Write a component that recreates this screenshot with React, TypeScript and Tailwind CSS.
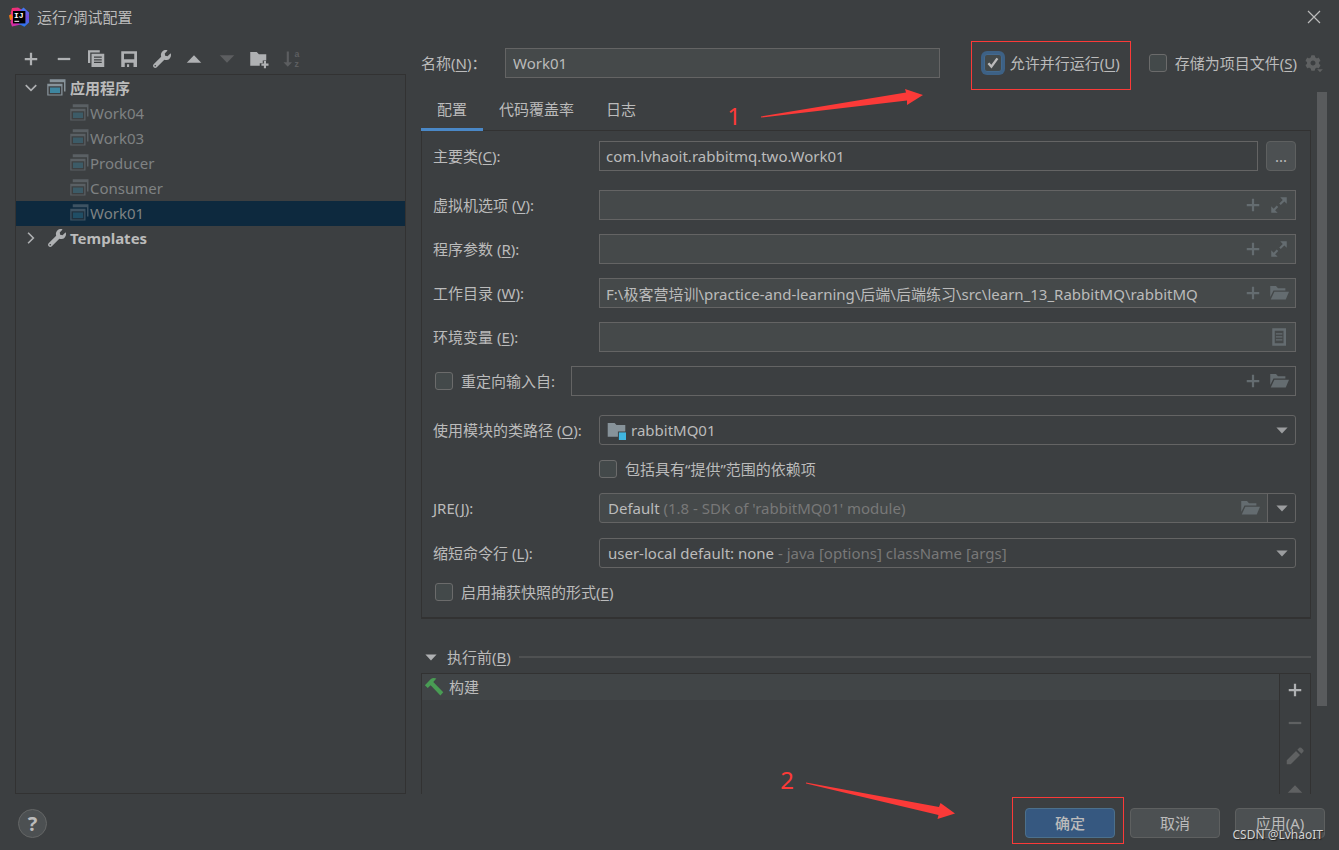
import React, { useState } from 'react';
import { FaCog, FaWrench } from 'react-icons/fa';

type IconProps = { className?: string };

const Svg = ({ className = 'size-5', children }: IconProps & { children: React.ReactNode }) => (
  <svg viewBox="0 0 16 16" className={className} fill="currentColor" aria-hidden="true">
    {children}
  </svg>
);

const PlusIcon = ({ className }: IconProps) => (
  <Svg className={className}>
    <path d="M7.1 3h1.8v4.1H13v1.8H8.9V13H7.1V8.9H3V7.1h4.1z" />
  </Svg>
);

const MinusIcon = ({ className }: IconProps) => (
  <Svg className={className}>
    <path d="M3 7.1h10v1.8H3z" />
  </Svg>
);

const CopyIcon = ({ className }: IconProps) => (
  <Svg className={className}>
    <path d="M1.6 1h9.4v1.8H3.4v8.4H1.6z" />
    <path fillRule="evenodd" d="M4.4 3.8h10.2v10.6H4.4zM6.4 6v1h6.2V6zm0 2.1v1h6.2v-1zm0 2.1v1h6.2v-1z" />
  </Svg>
);

const SaveIcon = ({ className }: IconProps) => (
  <Svg className={className}>
    <path fillRule="evenodd" d="M1.8 1.8h12.6v12.6H1.8zM4 3.8v4.4h8.2V3.8zM4.6 11v3.4h1.8v-2.2h1.7v2.2h3.5V11z" />
  </Svg>
);

const UpIcon = ({ className }: IconProps) => (
  <Svg className={className}>
    <path d="M2.2 11L8 5l5.8 6z" />
  </Svg>
);

const DownIcon = ({ className }: IconProps) => (
  <Svg className={className}>
    <path d="M2.2 5L8 11l5.8-6z" />
  </Svg>
);

const NewFolderIcon = ({ className }: IconProps) => (
  <Svg className={className}>
    <path d="M1 2.4h5.2l1.7 1.8h5.9v5H11v2.2H8.6v2H1z" />
    <path d="M11.9 9.6h1.7v2h2v1.7h-2v2h-1.7v-2h-2v-1.7h2z" />
  </Svg>
);

const SortIcon = ({ className }: IconProps) => (
  <Svg className={className}>
    <path d="M3.8 2h1.7v8.6H8l-3.4 3.6-3.4-3.6h2.6z" />
    <text x="10" y="6.6" fontSize="7" fontWeight="bold" fontFamily="Liberation Sans">a</text>
    <text x="10" y="14.6" fontSize="7" fontWeight="bold" fontFamily="Liberation Sans">z</text>
  </Svg>
);

const ExpandIcon = ({ className }: IconProps) => (
  <Svg className={className}>
    <path d="M9 1.8h5.2V7l-1.9-1.9-2.9 2.9-1.2-1.2 2.8-2.9zM1.8 9l1.9 1.9 2.5-2.5 1.2 1.2-2.5 2.5L6.900 14.200H1.800z" />
  </Svg>
);

const FolderIcon = ({ className }: IconProps) => (
  <Svg className={className}>
    <path d="M1 2.4h4.6l1.6 1.8h5.9v1.7H3.6L1 11.2z" />
    <path d="M4.3 6.9H16l-2.6 6.3H1.4z" />
  </Svg>
);

const DocumentIcon = ({ className }: IconProps) => (
  <Svg className={className}>
    <path fillRule="evenodd" d="M2.600 1h11v14h-11zm2 2v10h7V3z" />
    <path d="M5.500 5h5.200v1H5.500zM5.500 7.400h5.200v1H5.500zM5.500 9.800h5.200v1H5.500z" />
  </Svg>
);

const PencilIcon = ({ className }: IconProps) => (
  <Svg className={className}>
    <path d="M1.400 14.600v-3.200l7.400-7.400L12 7.200l-7.400 7.400zM9.900 2.900l1.500-1.500q.8-.6 1.600 0l1.600 1.600q.6.8 0 1.600l-1.500 1.500z" />
  </Svg>
);

const HammerIcon = ({ className }: IconProps) => (
  <Svg className={className}>
    <path d="M.7 6.600L5.500 1.600q1.800-1.300 4.400-.4L7.400 4l8 8.200-2.300 2.500-7.800-8.200L3 8.800z" />
  </Svg>
);

const ArrowDown = ({ className }: IconProps) => (
  <svg viewBox="0 0 12 7" className={className} fill="currentColor" aria-hidden="true">
    <path d="M.4.4h11.2L6 6.600z" />
  </svg>
);

const AppIcon = ({ className }: IconProps) => (
  <svg viewBox="0 0 16 16" className={className} aria-hidden="true">
    <path fill="currentColor" d="M3 1h12.600v9.800h-1.200V3.300H3zM1 4.500h12.200V14H1z" />
    <path fill="#3c3f41" d="M2 6.600h10.200v6.600H2z" />
    <path fill="#3e86a0" d="M3.200 7.600h8V12h-8z" />
  </svg>
);

const ModuleIcon = ({ className }: IconProps) => (
  <svg viewBox="0 0 16 16" className={className} aria-hidden="true">
    <path fill="#87939a" d="M.6 1.600h5.800L8 3.400h7.400v5.400H9.200v4.400H.6z" />
    <path fill="#40b6e0" d="M10 9.600h6V16h-6z" />
  </svg>
);

const Logo = () => (
  <svg viewBox="0 0 20 20" className="size-5" aria-hidden="true">
    <defs>
      <linearGradient id="logo-blue" x1="0" y1="0" x2="0" y2="1">
        <stop offset="0" stopColor="#3b7cf5" />
        <stop offset=".5" stopColor="#7a4bd8" />
        <stop offset="1" stopColor="#1e7df2" />
      </linearGradient>
      <linearGradient id="logo-pink" x1="0" y1="0" x2="1" y2="1">
        <stop offset="0" stopColor="#fe315d" />
        <stop offset="1" stopColor="#b22bd8" />
      </linearGradient>
    </defs>
    <path fill="#f97a12" d="M0 8.600l4-3V14l-3-1.200z" />
    <path fill="url(#logo-pink)" d="M3 1l6-.6 5 3V17L3 19.400 1.400 15 4 10 1.600 6z" />
    <path fill="url(#logo-blue)" d="M11 3.400L14.600.4 20 5.600v10l-4.600 4.200L10 17z" />
    <path fill="#000" d="M4 4h12.400v12.400H4z" />
    <path fill="#fff" d="M5.400 13.800h4.800v1H5.400z" />
    <text x="5" y="11" fill="#fff" fontSize="8" fontWeight="bold" fontFamily="Liberation Mono">IJ</text>
  </svg>
);

const toolbar = [
  { label: '添加', icon: PlusIcon, disabled: false },
  { label: '移除', icon: MinusIcon, disabled: false },
  { label: '复制', icon: CopyIcon, disabled: false },
  { label: '保存', icon: SaveIcon, disabled: false },
  { label: '编辑模板', icon: FaWrench, disabled: false },
  { label: '上移', icon: UpIcon, disabled: false },
  { label: '下移', icon: DownIcon, disabled: true },
  { label: '新建文件夹', icon: NewFolderIcon, disabled: false },
  { label: '排序', icon: SortIcon, disabled: true },
];

const configurations = ['Work04', 'Work03', 'Producer', 'Consumer', 'Work01'];

const tabs = ['配置', '代码覆盖率', '日志'];

const Mnemonic = ({ text, letter, tail = '' }: { text: string; letter: string; tail?: string }) => (
  <>
    {text}(<span className="underline underline-offset-2">{letter}</span>){tail}
  </>
);

type CheckProps = { id: string; children: React.ReactNode; defaultChecked?: boolean; focused?: boolean };

const Check = ({ id, children, defaultChecked, focused }: CheckProps) => (
  <div className="flex h-[18px] items-center gap-2 whitespace-nowrap">
    <span className="grid size-[18px] shrink-0">
      <input
        id={id}
        type="checkbox"
        defaultChecked={defaultChecked}
        className={`peer col-start-1 row-start-1 size-[18px] appearance-none rounded-[3px] border bg-[#43494a] ${
          focused ? 'border-[#43698e] ring-3 ring-[#3d6185]' : 'border-[#6b6b6b]'
        }`}
      />
      <svg
        viewBox="0 0 18 18"
        className="pointer-events-none invisible col-start-1 row-start-1 size-[18px] peer-checked:visible"
        fill="none"
        stroke="#bbbbbb"
        strokeWidth="2.4"
        aria-hidden="true"
      >
        <path d="M4.400 9.200l3 3.400 6-8.200" />
      </svg>
    </span>
    <label htmlFor={id}>{children}</label>
  </div>
);

type FieldProps = {
  id: string;
  value?: string;
  label?: string;
  flat?: boolean;
  actions?: { label: string; icon: React.ComponentType<IconProps> }[];
};

const Field = ({ id, value = '', label, flat, actions = [] }: FieldProps) => (
  <div
    className={`flex h-[30px] min-w-0 flex-1 items-center border border-[#646464] ${flat ? 'bg-[#3c3f41]' : 'bg-[#45494a]'}`}
  >
    <input id={id} aria-label={label} defaultValue={value} className="h-full min-w-0 flex-1 bg-transparent px-1.5 outline-none" />
    {actions.length > 0 && (
      <div className="flex items-center gap-1.5 pr-1.5 text-[#646c70]">
        {actions.map(({ label: name, icon: Icon }) => (
          <button key={name} type="button" aria-label={name}>
            <Icon className="size-5" />
          </button>
        ))}
      </div>
    )}
  </div>
);

const Row = ({ id, label, children }: { id: string; label: React.ReactNode; children: React.ReactNode }) => (
  <div className="flex items-center">
    <label htmlFor={id} className="w-[166px] shrink-0 whitespace-nowrap">
      {label}
    </label>
    {children}
  </div>
);

const macro = { label: '插入宏', icon: PlusIcon };
const expand = { label: '展开', icon: ExpandIcon };
const browse = { label: '浏览', icon: FolderIcon };

const Sidebar = () => {
  const [selected, setSelected] = useState('Work01');

  return (
    <aside className="flex w-[391px] shrink-0 flex-col">
      <div className="flex h-10 w-[287px] items-center justify-between pt-2.5 pl-1.5">
        {toolbar.map(({ label, icon: Icon, disabled }) => (
          <button
            key={label}
            type="button"
            aria-label={label}
            disabled={disabled}
            className="grid size-5 place-items-center text-[#afb1b3] disabled:text-[#5c5e60]"
          >
            <Icon className={Icon === FaWrench ? 'size-[18px]' : 'size-5'} />
          </button>
        ))}
      </div>
      <div className="flex-1 border border-[#323232] pt-px">
        <div className="flex h-[25px] items-center pb-px font-bold">
          <svg viewBox="0 0 12 12" className="mr-2 ml-2 size-3.5" fill="none" stroke="#afb1b3" strokeWidth="1.4" aria-hidden="true">
            <path d="M1.500 3.500L6 8l4.500-4.500" />
          </svg>
          <AppIcon className="mr-1 size-5 text-[#87939a]" />
          应用程序
        </div>
        <ul>
          {configurations.map((name) => (
            <li key={name}>
              <button
                type="button"
                onClick={() => setSelected(name)}
                className={`flex h-[25px] w-full items-center pb-px pl-[53px] text-[#7f8283] ${name === selected ? 'bg-[#0d293e]' : ''}`}
              >
                <AppIcon className="mr-px size-5 text-[#87939a] opacity-40" />
                {name}
              </button>
            </li>
          ))}
        </ul>
        <div className="flex h-[25px] items-center pb-px font-bold">
          <svg viewBox="0 0 12 12" className="mr-2 ml-2 size-3.5" fill="none" stroke="#afb1b3" strokeWidth="1.4" aria-hidden="true">
            <path d="M3.500 1.500L8 6l-4.500 4.500" />
          </svg>
          <FaWrench className="mr-1 ml-0.5 size-[18px] text-[#afb1b3]" />
          Templates
        </div>
      </div>
    </aside>
  );
};

const Header = () => (
  <div className="flex h-14 items-end pr-1.5">
    <div className="flex h-[49px] flex-1 items-center">
      <label htmlFor="name" className="w-21 shrink-0 pb-1.5">
        <Mnemonic text="名称" letter="N" tail="：" />
      </label>
      <input id="name" defaultValue="Work01" className="mb-1.5 h-[30px] min-w-0 flex-1 border border-[#646464] bg-[#45494a] px-[7px] outline-none" />
      <div className="ml-[31px] flex h-[49px] items-center border border-[#fb3a38] pr-2.5 pb-1.5 pl-3">
        <Check id="parallel" defaultChecked focused>
          <Mnemonic text="允许并行运行" letter="U" />
        </Check>
      </div>
      <div className="ml-[18px] flex items-center gap-2 pb-1.5">
        <Check id="store">
          <Mnemonic text="存储为项目文件" letter="S" />
        </Check>
        <button type="button" aria-label="存储选项" className="relative text-[#5f6162]">
          <FaCog className="size-4" />
          <ArrowDown className="absolute -right-0.5 -bottom-0.5 w-1.5" />
        </button>
      </div>
    </div>
  </div>
);

const Tabs = () => {
  const [active, setActive] = useState(0);

  return (
    <div className="relative flex h-10" role="tablist">
      {tabs.map((tab, index) => (
        <button
          key={tab}
          type="button"
          role="tab"
          aria-selected={index === active}
          onClick={() => setActive(index)}
          className={`h-[41px] border-b-3 px-4 ${index === active ? 'border-[#4a88c7]' : 'border-transparent'}`}
        >
          {tab}
        </button>
      ))}
      <div className="pointer-events-none absolute -top-2 right-[388px] flex items-start gap-5 text-[#fb3a38]">
        <span className="pt-[22px] text-2xl leading-6">1</span>
        <svg viewBox="0 0 162 34" className="mt-1.5 h-[34px] w-[162px]" fill="currentColor" aria-hidden="true">
          <path d="M0 28.500L145 4.500 144 1 162 7 146 17 146 12.500 0 29.500z" />
        </svg>
      </div>
    </div>
  );
};

const ConfigPanel = () => (
  <section className="flex flex-col border border-b-2 border-[#323232] pt-2.5 pr-3.5 pb-4 pl-[11px]">
    <Row id="main-class" label={<Mnemonic text="主要类" letter="C" tail=":" />}>
      <Field id="main-class" value="com.lvhaoit.rabbitmq.two.Work01" flat />
      <button type="button" aria-label="选择主要类" className="ml-2 h-[30px] w-[30px] rounded-[4px] border border-[#5e6060] bg-[#4c5052]">
        ...
      </button>
    </Row>
    <div className="mt-[19px] flex flex-col gap-3.5">
      <Row id="vm" label={<Mnemonic text="虚拟机选项 " letter="V" tail=":" />}>
        <Field id="vm" actions={[macro, expand]} />
      </Row>
      <Row id="args" label={<Mnemonic text="程序参数 " letter="R" tail=":" />}>
        <Field id="args" actions={[macro, expand]} />
      </Row>
      <Row id="cwd" label={<Mnemonic text="工作目录 " letter="W" tail=":" />}>
        <Field
          id="cwd"
          value="F:\极客营培训\practice-and-learning\后端\后端练习\src\learn_13_RabbitMQ\rabbitMQ"
          actions={[macro, browse]}
        />
      </Row>
      <Row id="env" label={<Mnemonic text="环境变量 " letter="E" tail=":" />}>
        <Field id="env" actions={[{ label: '编辑环境变量', icon: DocumentIcon }]} />
      </Row>
      <div className="flex items-center pl-0.5">
        <div className="w-[136px]">
          <Check id="redirect">重定向输入自:</Check>
        </div>
        <Field id="redirect-file" label="输入文件" flat actions={[macro, browse]} />
      </div>
    </div>
    <div className="mt-[19px] flex flex-col gap-[15px]">
      <Row id="module" label={<Mnemonic text="使用模块的类路径 " letter="O" tail=":" />}>
        <div className="relative h-[30px] flex-1">
          <select id="module" className="h-full w-full appearance-none rounded-[3px] border border-[#646464] pl-[31px] outline-none">
            <option>rabbitMQ01</option>
          </select>
          <ModuleIcon className="pointer-events-none absolute top-1.5 left-2 size-[19px]" />
          <ArrowDown className="pointer-events-none absolute top-3 right-2 w-3 text-[#9b9d9f]" />
        </div>
      </Row>
      <div className="pl-[166px]">
        <Check id="provided">包括具有“提供”范围的依赖项</Check>
      </div>
      <Row id="jre" label={<Mnemonic text="JRE" letter="J" tail=":" />}>
        <div className="relative flex h-[30px] flex-1 items-center overflow-hidden rounded-[3px] border border-[#646464] bg-[#45494a]">
          <select id="jre" className="absolute inset-0 appearance-none text-transparent outline-none">
            <option value="default" label=" " />
          </select>
          <span className="pointer-events-none flex-1 pl-2 whitespace-pre">
            Default <span className="text-[#787878]">(1.8 - SDK of 'rabbitMQ01' module)</span>
          </span>
          <FolderIcon className="pointer-events-none mr-[7px] size-5 text-[#646c70]" />
          <span className="pointer-events-none grid h-full w-7 place-items-center border-l border-[#646464] bg-[#3c3f41]">
            <ArrowDown className="w-3 text-[#9b9d9f]" />
          </span>
        </div>
      </Row>
      <Row id="shorten" label={<Mnemonic text="缩短命令行 " letter="L" tail=":" />}>
        <div className="relative flex h-[30px] flex-1 items-center rounded-[3px] border border-[#646464]">
          <select id="shorten" className="absolute inset-0 appearance-none text-transparent outline-none">
            <option value="none" label=" " />
          </select>
          <span className="pointer-events-none flex-1 pl-2 whitespace-pre">
            user-local default: none <span className="text-[#787878]">- java [options] className [args]</span>
          </span>
          <ArrowDown className="pointer-events-none mr-[7px] w-3 text-[#9b9d9f]" />
        </div>
      </Row>
      <div className="pl-0.5">
        <Check id="snapshot">
          <Mnemonic text="启用捕获快照的形式" letter="E" />
        </Check>
      </div>
    </div>
  </section>
);

const BeforeLaunch = () => (
  <section className="flex min-h-0 flex-1 flex-col pt-[26px]">
    <div className="flex h-6 items-center">
      <button type="button" className="flex items-center gap-2.5 pl-1">
        <ArrowDown className="w-3 text-[#afb1b3]" />
        <span>
          <Mnemonic text="执行前" letter="B" />
        </span>
      </button>
      <div className="ml-2 h-0.5 flex-1 bg-[#4f5152]" />
    </div>
    <div className="mt-1 flex min-h-0 flex-1 border border-b-0 border-[#323232]">
      <div className="flex-1">
        <div className="flex h-[26px] items-center gap-[5px] bg-[#414547] pb-px pl-0.5">
          <HammerIcon className="size-5 text-[#499c54]" />
          构建
        </div>
      </div>
      <div className="flex w-[31px] flex-col items-center gap-[13px] overflow-hidden border-l border-[#323232] pt-1.5 text-[#5f6162]">
        <button type="button" aria-label="添加任务" className="text-[#afb1b3]">
          <PlusIcon className="size-5" />
        </button>
        <button type="button" aria-label="移除任务" disabled>
          <MinusIcon className="size-5" />
        </button>
        <button type="button" aria-label="编辑任务" disabled>
          <PencilIcon className="size-5" />
        </button>
        <button type="button" aria-label="上移任务" disabled>
          <UpIcon className="size-5" />
        </button>
      </div>
    </div>
  </section>
);

const Footer = () => (
  <footer className="relative flex h-14 shrink-0 items-end pr-3.5 pb-1.5 pl-[18px]">
    <button type="button" aria-label="帮助" className="mb-1.5 size-[29px] rounded-full border border-[#646666] bg-[#4c5052] text-xl leading-6 font-bold">
      ?
    </button>
    <div className="ml-auto flex items-end">
      <div className="pointer-events-none absolute right-[383px] bottom-0.5 flex h-20 items-start gap-3 text-[#fb3a38]">
        <span className="text-2xl leading-6">2</span>
        <svg viewBox="0 0 150 40" className="mt-3.5 h-10 w-[150px]" fill="currentColor" aria-hidden="true">
          <path d="M0 .5L133 25 134.500 21 149 31.500 131.500 37 132.500 33 0 1.500z" />
        </svg>
      </div>
      <div className="mr-1.5 border border-[#fb3a38] pt-2.5 pr-2 pb-[5px] pl-3">
        <button type="button" className="block h-[30px] w-[90px] rounded-[4px] border border-[#4c708c] bg-[#365880] font-medium">
          确定
        </button>
      </div>
      <div className="mb-1.5 flex gap-[15px]">
        <button type="button" className="h-[30px] w-[90px] rounded-[4px] border border-[#5e6060] bg-[#4c5052]">
          取消
        </button>
        <button type="button" className="h-[30px] w-[90px] rounded-[4px] border border-[#5e6060] bg-[#4c5052]">
          应用(A)
        </button>
      </div>
    </div>
    <span className="pointer-events-none absolute right-4 bottom-[7px] text-xs leading-4 text-[#d2d2d2] [text-shadow:1px_1px_1px_#222]">
      CSDN @LvhaoIT
    </span>
  </footer>
);

const App = () => (
  <div className="flex h-screen flex-col bg-[#3c3f41] font-['Noto_Sans','Noto_Sans_CJK_SC',sans-serif] text-[15px] leading-5 text-[#bbbbbb]">
    <header className="flex h-[34px] shrink-0 items-center gap-2 pr-[18px] pl-[9px]">
      <Logo />
      <h1>运行/调试配置</h1>
      <button type="button" aria-label="关闭" className="ml-auto">
        <svg viewBox="0 0 14 14" className="size-3.5" fill="none" stroke="#bbbbbb" strokeWidth="1.2" aria-hidden="true">
          <path d="M1 1l12 12M13 1L1 13" />
        </svg>
      </button>
    </header>
    <main className="flex min-h-0 flex-1 gap-[15px] pr-3 pl-[15px]">
      <Sidebar />
      <div className="flex min-w-0 flex-1 flex-col">
        <Header />
        <div className="flex min-h-0 flex-1 gap-1.5">
          <div className="flex min-w-0 flex-1 flex-col">
            <Tabs />
            <ConfigPanel />
            <BeforeLaunch />
          </div>
          <div className="mt-0.5 mb-22 w-2.5 bg-[#595b5d]" />
        </div>
      </div>
    </main>
    <Footer />
  </div>
);

export default App;
